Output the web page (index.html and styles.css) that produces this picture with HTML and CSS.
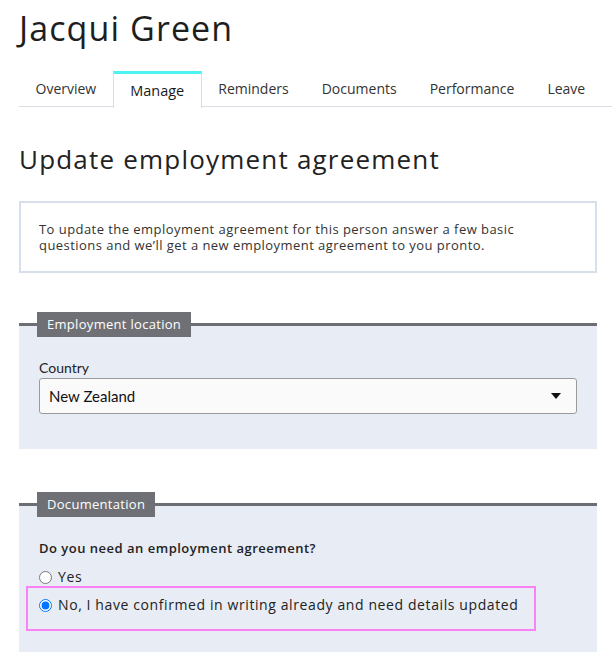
FILE: index.html
```html
<!DOCTYPE html>
<html lang="en">
<head>
<meta charset="utf-8">
<title>Jacqui Green</title>
<link rel="stylesheet" href="styles.css">
</head>
<body>
<div class="page">
  <h1 class="name">Jacqui Green</h1>
  <nav class="tabs">
    <a class="tab">Overview</a>
    <a class="tab tab-active">Manage</a>
    <a class="tab">Reminders</a>
    <a class="tab">Documents</a>
    <a class="tab">Performance</a>
    <a class="tab">Leave</a>
  </nav>
  <h2 class="title">Update employment agreement</h2>
  <div class="info">To update the employment agreement for this person answer a few basic questions and we’ll get a new employment agreement to you pronto.</div>

  <section class="panel panel-location">
    <div class="panel-legend">Employment location</div>
    <label class="field-label">Country</label>
    <div class="select">
      <span>New Zealand</span>
      <svg class="caret" width="10" height="6" viewBox="0 0 10 6"><path d="M0 0h10L5 6z" fill="#111"/></svg>
    </div>
  </section>

  <section class="panel panel-docs">
    <div class="panel-legend">Documentation</div>
    <p class="question">Do you need an employment agreement?</p>
    <label class="radio"><input type="radio" name="ea"> Yes</label>
    <div class="highlight">
      <label class="radio"><input type="radio" name="ea" checked> No, I have confirmed in writing already and need details updated</label>
    </div>
  </section>
</div>
</body>
</html>
```

FILE: styles.css
```css
* { box-sizing: border-box; }
html, body { margin: 0; padding: 0; background: #fff; }
body {
  font-family: "Open Sans", "Liberation Sans", sans-serif;
  color: #2b2b2b;
}
.page { padding: 0 15px 0 19px; }
.name {
  margin: 0;
  padding-top: 8px;
  font-size: 34px;
  line-height: 40px;
  font-weight: 400;
  letter-spacing: 1.1px;
  color: #1e1e1e;
}
.tabs {
  display: flex;
  margin: 23px -15px 0 0;
  border-bottom: 1px solid #dddde6;
  height: 36px;
}
.tab {
  display: block;
  padding: 0 16.5px;
  font-size: 14px;
  line-height: 30px;
  color: #333;
  border-top: 3px solid transparent;
}
.tab-active {
  border-top-color: #4df3f3;
  border-left: 1px solid #dddde6;
  border-right: 1px solid #dddde6;
  background: #fff;
  height: 37px;
  padding-top: 2px;
  color: #1a1a1a;
  font-size: 14.5px;
}
.title {
  margin: 36px 0 0;
  font-size: 26px;
  line-height: 32px;
  font-weight: 400;
  letter-spacing: 1.2px;
  color: #222;
}
.info {
  margin-top: 26px;
  border: 2px solid #d6dfeb;
  padding: 18px 18px;
  font-size: 13px;
  line-height: 16px;
  letter-spacing: 0.45px;
  color: #333;
}
.panel {
  border-top: 3px solid #6d6e73;
  background: #e8ecf4;
  padding: 0 20px 35px;
}
.panel-location { margin-top: 50px; }
.panel-docs { margin-top: 54px; padding-bottom: 21px; }
.panel-legend {
  display: block;
  width: max-content;
  margin: -14px 0 0 -2px;
  height: 25px;
  line-height: 25px;
  padding: 0 10px;
  background: #6e7076;
  color: #fff;
  font-size: 13px;
  letter-spacing: 0.3px;
}
.field-label {
  display: block;
  margin-top: 22px;
  font-family: Lato, "Liberation Sans", sans-serif;
  font-size: 14px;
  line-height: 18px;
  color: #222;
}
.select {
  display: flex;
  align-items: center;
  justify-content: space-between;
  height: 36px;
  margin-top: 1px;
  border: 1px solid #9a9a9a;
  border-radius: 3px;
  background: #fafafa;
  padding: 0 15px 0 9px;
  font-family: Lato, "Liberation Sans", sans-serif;
  font-size: 15px;
  color: #111;
}
.caret { display: block; }
.question {
  margin: 22px 0 0;
  font-size: 13px;
  line-height: 18px;
  font-weight: 600;
  letter-spacing: 0.5px;
  color: #222;
}
.radio {
  display: flex;
  align-items: center;
  font-size: 14px;
  line-height: 20px;
  letter-spacing: 0.6px;
  color: #222;
}
.panel-docs > .radio { margin-top: 10px; }
.radio input {
  margin: 0 6px 0 0;
  width: 13px;
  height: 13px;
}
.highlight {
  display: inline-block;
  margin: -1px 0 0 -13px;
  border: 2px solid #fb82f6;
  padding: 7px 16px 14px 11px;
}
```
